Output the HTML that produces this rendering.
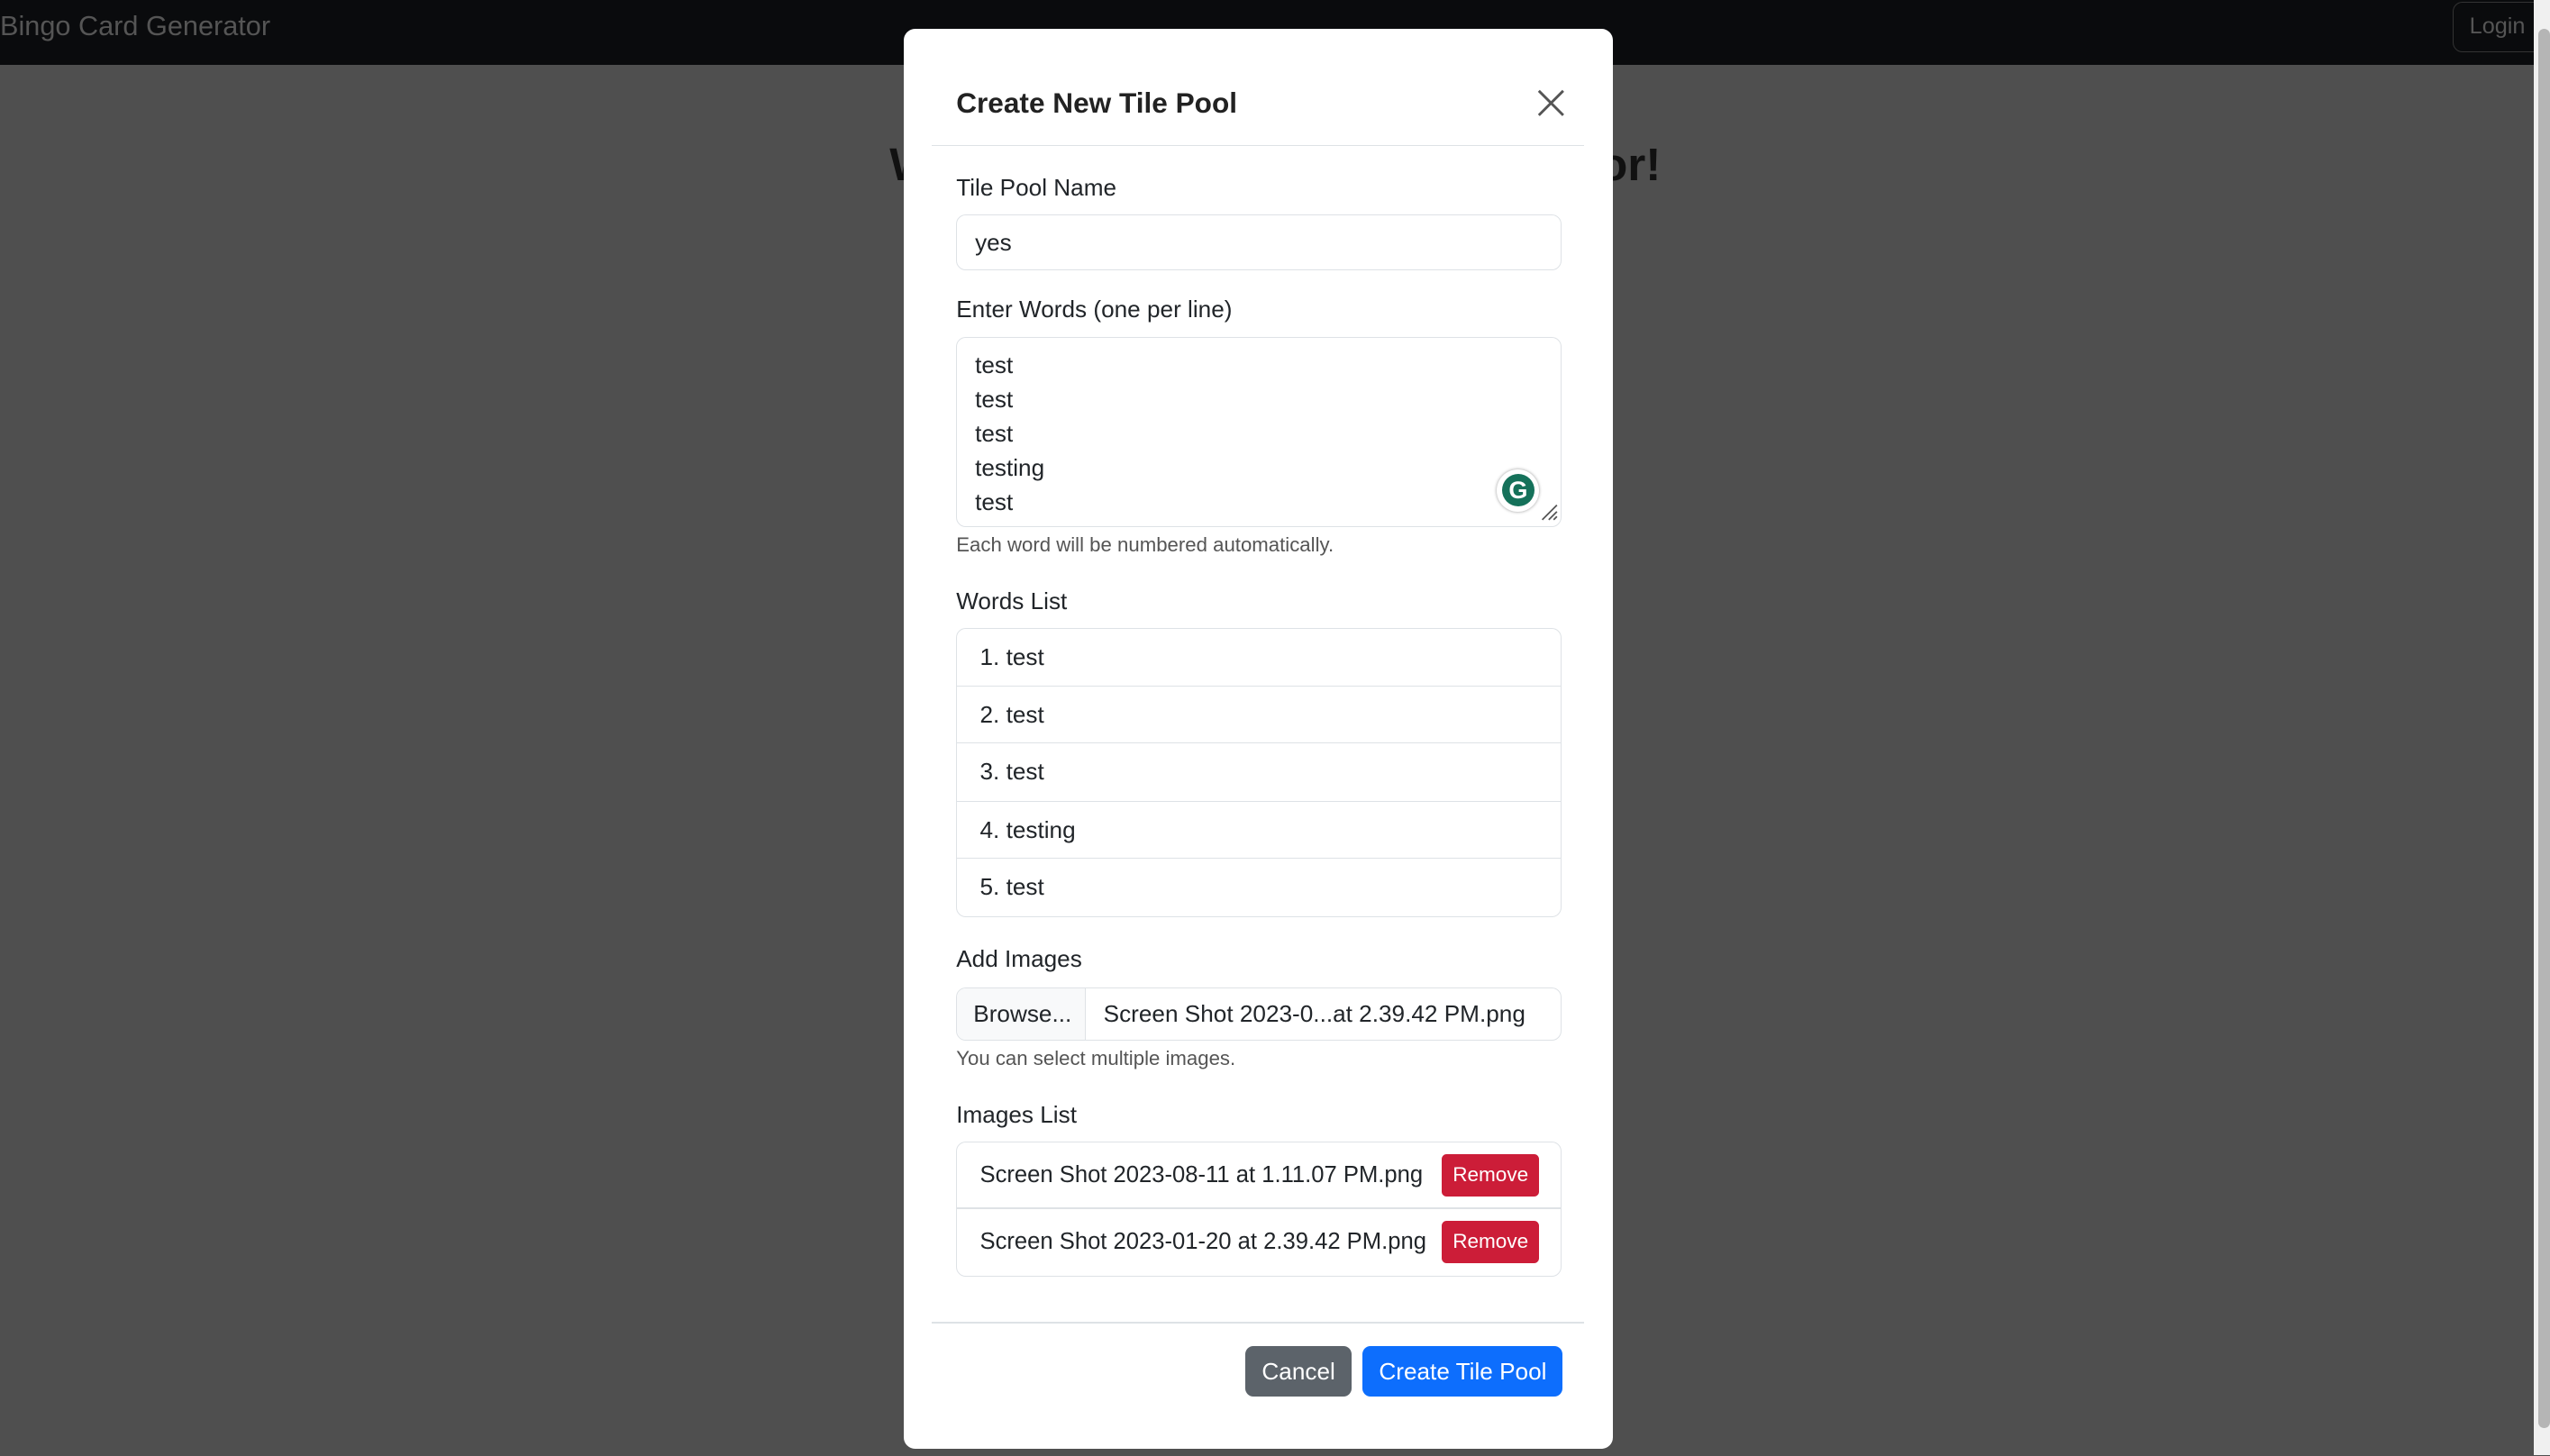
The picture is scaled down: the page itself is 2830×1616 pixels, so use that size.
<!DOCTYPE html>
<html><head><style>
html{zoom:1.8048}
body{margin:0;width:1568px;height:895px;background:#4f4f4f;position:relative;overflow:hidden;font-family:"Liberation Sans",sans-serif;color:#212529;font-size:14.5px}
.a{position:absolute}
.nav{left:0;top:0;width:1558px;height:40px;background:#0a0b0d}
.modal{left:556px;top:18px;width:436px;height:873px;background:#fff;border-radius:7px}
.lbl{left:32px;font-size:14.5px}
.box{left:32px;width:371px;border:1px solid #dee2e6;border-radius:6px;background:#fff}
.help{left:32px;font-size:12.3px;color:#555}
.li{left:0;width:371px;height:35px;border-top:1px solid #dee2e6;line-height:35px;padding-left:14px;box-sizing:border-box}
.rm{background:#cc1d38;color:#fff;border-radius:3px;font-size:12.5px;width:60px;height:26px;line-height:26px;text-align:center;left:298px}
</style></head><body>
<div class="a nav"></div>
<div class="a" style="left:0;top:6px;font-size:17px;color:#555">Bingo Card Generator</div>
<div class="a" style="left:1508px;top:1px;width:56px;height:31px;border:1px solid #333;border-radius:6px;box-sizing:border-box;color:#555;font-size:14px;line-height:29px;padding-left:10px">Login</div>
<div class="a" style="left:1558px;top:0;width:10px;height:895px;background:#f0f0f0"></div>
<div class="a" style="left:1561px;top:18px;width:7px;height:860px;background:#b5b5b5;border-radius:4px"></div>
<div class="a" style="left:547px;top:84px;font-size:28.5px;font-weight:bold;color:#111;white-space:nowrap">Welcome to Bingo Card Generator!</div>
<div class="a modal">
 <div class="a" style="left:32px;top:35px;font-size:17.5px;font-weight:bold;color:#222">Create New Tile Pool</div>
 <svg class="a" style="left:389px;top:37px" width="17" height="17" viewBox="0 0 17 17"><path d="M1 1L16 16M16 1L1 16" stroke="#555" stroke-width="1.6"/></svg>
 <div class="a" style="left:17px;top:71px;width:401px;height:1px;background:#dee2e6"></div>
 <div class="a lbl" style="top:89px">Tile Pool Name</div>
 <div class="a box" style="top:114px;height:33px"><div class="a" style="left:11px;top:8px">yes</div></div>
 <div class="a lbl" style="top:164px">Enter Words (one per line)</div>
 <div class="a box" style="top:189px;height:116px"><div class="a" style="left:11px;top:7px;line-height:21px">test<br>test<br>test<br>testing<br>test</div>
  <div class="a" style="left:332px;top:81px;width:26px;height:26px;border-radius:50%;background:#fff;box-shadow:0 0 2px #999"><div class="a" style="left:3px;top:3px;width:20px;height:20px;border-radius:50%;background:#15715a;color:#fff;font-weight:bold;font-size:15px;text-align:center;line-height:20px">G</div></div>
  <svg class="a" style="left:358px;top:101px" width="12" height="12"><path d="M11 2L2 11M11 6L6 11M11 9L9 11" stroke="#555"/></svg>
 </div>
 <div class="a help" style="top:310px">Each word will be numbered automatically.</div>
 <div class="a lbl" style="top:343px">Words List</div>
 <div class="a box" style="top:368px;height:177px;overflow:hidden">
  <div class="a li" style="top:0;border-top:none">1. test</div>
  <div class="a li" style="top:35px">2. test</div>
  <div class="a li" style="top:70px">3. test</div>
  <div class="a li" style="top:106px">4. testing</div>
  <div class="a li" style="top:141px">5. test</div>
 </div>
 <div class="a lbl" style="top:563px">Add Images</div>
 <div class="a box" style="top:589px;height:32px;overflow:hidden">
  <div class="a" style="left:0;top:0;width:79px;height:32px;background:#f8f9fa;border-right:1px solid #dee2e6;line-height:32px;padding-left:10px;box-sizing:border-box">Browse...</div>
  <div class="a" style="left:90px;top:0;line-height:32px">Screen Shot 2023-0...at 2.39.42 PM.png</div>
 </div>
 <div class="a help" style="top:626px">You can select multiple images.</div>
 <div class="a lbl" style="top:659px">Images List</div>
 <div class="a box" style="top:684px;height:82px">
  <div class="a" style="left:14px;top:12px;font-size:14.2px">Screen Shot 2023-08-11 at 1.11.07 PM.png</div>
  <div class="a rm" style="top:7px">Remove</div>
  <div class="a" style="left:0;top:40px;width:371px;height:1px;background:#dee2e6"></div>
  <div class="a" style="left:14px;top:53px;font-size:14.2px">Screen Shot 2023-01-20 at 2.39.42 PM.png</div>
  <div class="a rm" style="top:48px">Remove</div>
 </div>
 <div class="a" style="left:17px;top:795px;width:401px;height:1px;background:#dee2e6"></div>
 <div class="a" style="left:210px;top:810px;width:65px;height:31px;background:#5c636a;color:#fff;border-radius:5px;text-align:center;line-height:32px">Cancel</div>
 <div class="a" style="left:282px;top:810px;width:123px;height:31px;background:#0d6efd;color:#fff;border-radius:5px;text-align:center;line-height:32px">Create Tile Pool</div>
</div>
</body></html>
